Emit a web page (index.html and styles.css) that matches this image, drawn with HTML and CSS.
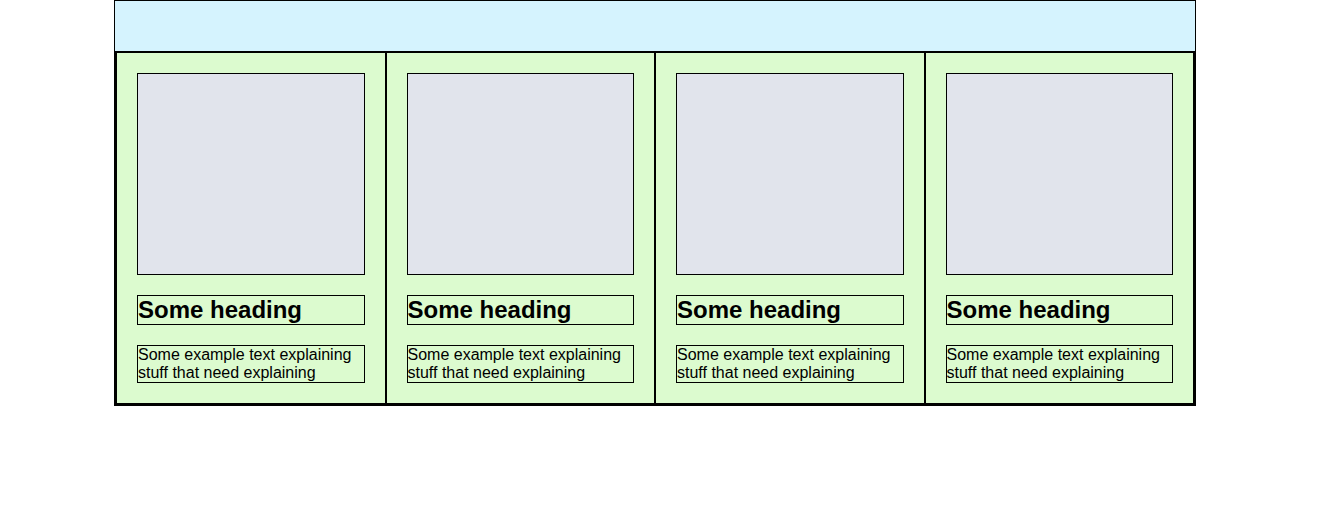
FILE: index.html
```html
<!DOCTYPE html>
<html lang="en">
<head>
<meta charset="utf-8">
<title>Cards</title>
<link rel="stylesheet" href="styles.css">
</head>
<body>
<div class="page">
  <header class="top-bar"></header>
  <main class="card-row">
    <article class="card">
      <div class="card-image"></div>
      <h2 class="card-title">Some heading</h2>
      <p class="card-text">Some example text explaining stuff that need explaining</p>
    </article>
    <article class="card">
      <div class="card-image"></div>
      <h2 class="card-title">Some heading</h2>
      <p class="card-text">Some example text explaining stuff that need explaining</p>
    </article>
    <article class="card">
      <div class="card-image"></div>
      <h2 class="card-title">Some heading</h2>
      <p class="card-text">Some example text explaining stuff that need explaining</p>
    </article>
    <article class="card">
      <div class="card-image"></div>
      <h2 class="card-title">Some heading</h2>
      <p class="card-text">Some example text explaining stuff that need explaining</p>
    </article>
  </main>
</div>
</body>
</html>
```
FILE: styles.css
```css
* {
  box-sizing: border-box;
}

html, body {
  margin: 0;
  padding: 0;
  background: #ffffff;
}

body {
  font-family: "Liberation Sans", Arial, sans-serif;
  color: #000000;
}

.page {
  width: 1082px;
  margin-left: 114px;
}

.top-bar {
  display: block;
  height: 52px;
  background: #d5f3fe;
  border: 1px solid #000000;
}

.card-row {
  display: grid;
  grid-template-columns: repeat(4, 1fr);
  border: 2px solid #000000;
  border-top: none;
  background: #dcfbcf;
}

.card {
  display: flex;
  flex-direction: column;
  gap: 20px;
  padding: 20px;
  border: 1px solid #000000;
}

.card-image {
  height: 202px;
  background: #e1e4ec;
  border: 1px solid #000000;
}

.card-title {
  margin: 0;
  font-size: 24px;
  line-height: 28px;
  font-weight: bold;
  border: 1px solid #000000;
}

.card-text {
  margin: 0;
  font-size: 16px;
  line-height: 18px;
  border: 1px solid #000000;
}
```
